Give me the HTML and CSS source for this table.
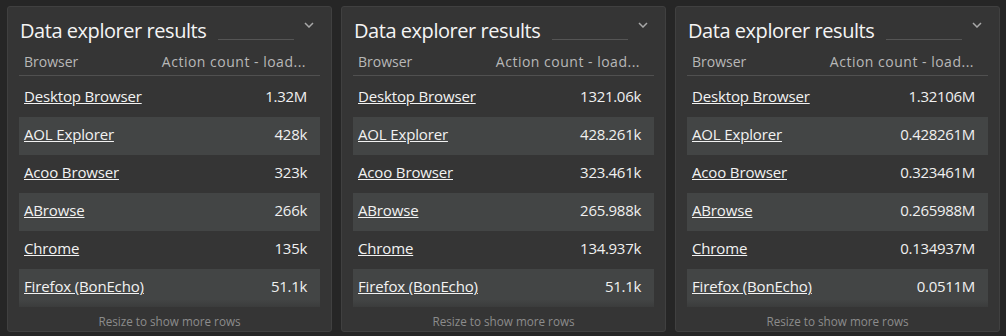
FILE: index.html
```html
<!DOCTYPE html>
<html lang="en">
<head>
<meta charset="utf-8">
<title>Data explorer results</title>
<link rel="stylesheet" href="styles.css">
</head>
<body>
<main class="board">
  <section class="panel">
    <header class="panel-head">
      <h2 class="panel-title">Data explorer results</h2>
      <span class="title-field"></span>
      <svg class="chevron" width="10" height="6" viewBox="0 0 10 6"><path d="M1 1l4 4 4-4" fill="none" stroke="#a8a8a8" stroke-width="1.5"/></svg>
    </header>
    <table class="results">
      <thead><tr><th class="c-name">Browser</th><th class="c-val">Action count - load...</th></tr></thead>
      <tbody>
        <tr><td><a href="#">Desktop Browser</a></td><td class="c-val">1.32M</td></tr>
        <tr class="alt"><td><a href="#">AOL Explorer</a></td><td class="c-val">428k</td></tr>
        <tr><td><a href="#">Acoo Browser</a></td><td class="c-val">323k</td></tr>
        <tr class="alt"><td><a href="#">ABrowse</a></td><td class="c-val">266k</td></tr>
        <tr><td><a href="#">Chrome</a></td><td class="c-val">135k</td></tr>
        <tr class="alt last"><td><a href="#">Firefox (BonEcho)</a></td><td class="c-val">51.1k</td></tr>
      </tbody>
    </table>
    <p class="more">Resize to show more rows</p>
  </section>
  <section class="panel">
    <header class="panel-head">
      <h2 class="panel-title">Data explorer results</h2>
      <span class="title-field"></span>
      <svg class="chevron" width="10" height="6" viewBox="0 0 10 6"><path d="M1 1l4 4 4-4" fill="none" stroke="#a8a8a8" stroke-width="1.5"/></svg>
    </header>
    <table class="results">
      <thead><tr><th class="c-name">Browser</th><th class="c-val">Action count - load...</th></tr></thead>
      <tbody>
        <tr><td><a href="#">Desktop Browser</a></td><td class="c-val">1321.06k</td></tr>
        <tr class="alt"><td><a href="#">AOL Explorer</a></td><td class="c-val">428.261k</td></tr>
        <tr><td><a href="#">Acoo Browser</a></td><td class="c-val">323.461k</td></tr>
        <tr class="alt"><td><a href="#">ABrowse</a></td><td class="c-val">265.988k</td></tr>
        <tr><td><a href="#">Chrome</a></td><td class="c-val">134.937k</td></tr>
        <tr class="alt last"><td><a href="#">Firefox (BonEcho)</a></td><td class="c-val">51.1k</td></tr>
      </tbody>
    </table>
    <p class="more">Resize to show more rows</p>
  </section>
  <section class="panel">
    <header class="panel-head">
      <h2 class="panel-title">Data explorer results</h2>
      <span class="title-field"></span>
      <svg class="chevron" width="10" height="6" viewBox="0 0 10 6"><path d="M1 1l4 4 4-4" fill="none" stroke="#a8a8a8" stroke-width="1.5"/></svg>
    </header>
    <table class="results">
      <thead><tr><th class="c-name">Browser</th><th class="c-val">Action count - load...</th></tr></thead>
      <tbody>
        <tr><td><a href="#">Desktop Browser</a></td><td class="c-val">1.32106M</td></tr>
        <tr class="alt"><td><a href="#">AOL Explorer</a></td><td class="c-val">0.428261M</td></tr>
        <tr><td><a href="#">Acoo Browser</a></td><td class="c-val">0.323461M</td></tr>
        <tr class="alt"><td><a href="#">ABrowse</a></td><td class="c-val">0.265988M</td></tr>
        <tr><td><a href="#">Chrome</a></td><td class="c-val">0.134937M</td></tr>
        <tr class="alt last"><td><a href="#">Firefox (BonEcho)</a></td><td class="c-val">0.0511M</td></tr>
      </tbody>
    </table>
    <p class="more">Resize to show more rows</p>
  </section>
</main>
</body>
</html>
```
FILE: styles.css
```css
html, body {
  margin: 0;
  padding: 0;
  background: #262626;
  font-family: "Open Sans", "Noto Sans", sans-serif;
  color: #f0f0f0;
}
.board {
  display: flex;
  gap: 9px;
  padding: 6px 5px 4px 7px;
}
.panel {
  box-sizing: border-box;
  width: 325px;
  height: 326px;
  background: #353535;
  border: 1px solid #404040;
  border-radius: 3px;
  padding: 10px 11px 2px 11px;
  display: flex;
  flex-direction: column;
}
.panel-head {
  display: flex;
  align-items: flex-start;
  height: 28px;
  padding-left: 1px;
}
.panel-title {
  margin: 0;
  font-size: 20px;
  font-weight: 400;
  line-height: 28px;
  letter-spacing: -0.45px;
  color: #f4f4f4;
  white-space: nowrap;
}
.title-field {
  width: 76px;
  height: 22px;
  margin-left: 12px;
  border-bottom: 1px solid #555;
}
.chevron {
  margin-left: auto;
  margin-right: 6px;
  margin-top: 5px;
}
.results {
  margin-top: 7px;
  width: 100%;
  border-collapse: collapse;
  font-size: 15px;
}
.results th {
  font-size: 14px;
  font-weight: 400;
  color: #b8b8b8;
  line-height: 20px;
  padding: 0 5px 3px 5px;
  border-bottom: 1px solid #505050;
  white-space: nowrap;
}
.results th.c-name { text-align: left; }
.results th.c-val { letter-spacing: 0.5px; padding-right: 14px; }
.results tbody::before {
  content: "";
  display: block;
  height: 3px;
}
.results td {
  height: 38px;
  line-height: 35px;
  padding: 0 5px 3px 5px;
  box-sizing: border-box;
  white-space: nowrap;
  letter-spacing: -0.15px;
}
.results .c-val {
  text-align: right;
  padding-right: 13px;
}
.results td.c-val { letter-spacing: -0.3px; }
.results tr.alt td { background: #434545; }
.results tr.last td {
  background: linear-gradient(#434545 0, #434545 80%, #3b3c3c 100%);
}
.results a {
  color: #f2f2f2;
  text-decoration: underline;
}
.more {
  margin: auto 0 0 0;
  text-align: center;
  font-size: 11.7px;
  line-height: 16px;
  color: #8c8c8c;
}
```
